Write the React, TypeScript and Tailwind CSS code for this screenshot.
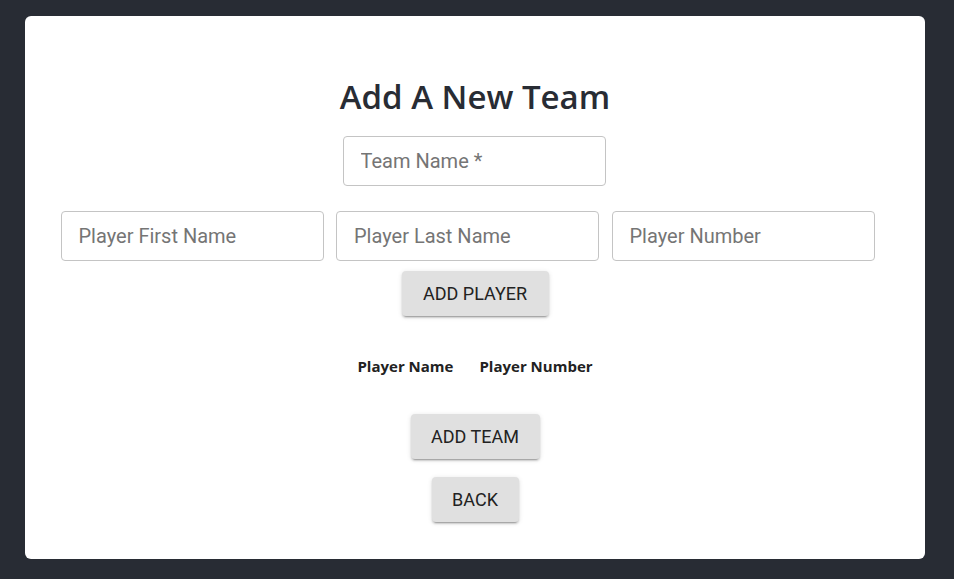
export default function App() {
  const inputCls =
    "h-[50px] w-[263px] rounded-[4px] border border-[#c4c4c4] bg-white px-[17px] text-[20px] text-[#333] placeholder:text-[#757575] outline-none";
  const btnCls =
    "rounded-[4px] bg-[#e0e0e0] text-[18px] uppercase text-[#222] shadow-[0_3px_1px_-2px_rgba(0,0,0,0.2),0_2px_2px_0_rgba(0,0,0,0.14),0_1px_5px_0_rgba(0,0,0,0.12)]";

  return (
    <div className="min-h-[579px] bg-[#282c34] px-[25px] pt-[16px] pb-[20px]">
      <div className="flex h-[543px] w-[900px] flex-col items-center rounded-[6px] bg-white pt-[64px]">
        <h1 className="font-['Open_Sans',sans-serif] text-[33px] font-semibold leading-none text-[#282c34]">
          Add A New Team
        </h1>
        <input className={`${inputCls} mt-[23px] mr-[2px] font-['Roboto',sans-serif]`} placeholder="Team Name *" />
        <div className="mt-[25px] flex gap-[12.5px] pr-[15px] font-['Roboto',sans-serif]">
          <input className={inputCls} placeholder="Player First Name" />
          <input className={inputCls} placeholder="Player Last Name" />
          <input className={inputCls} placeholder="Player Number" />
        </div>
        <button className={`${btnCls} mt-[10px] h-[45px] w-[147px] font-['Roboto',sans-serif]`}>Add Player</button>
        <table className="mt-[39px] font-['Open_Sans',sans-serif] text-[15px] font-bold text-[#222]">
          <thead>
            <tr>
              <th className="px-[13px]">Player Name</th>
              <th className="px-[13px]">Player Number</th>
            </tr>
          </thead>
        </table>
        <button className={`${btnCls} mt-[36px] h-[45px] w-[129px] font-['Roboto',sans-serif]`}>Add Team</button>
        <button className={`${btnCls} mt-[18px] h-[45px] w-[87px] font-['Roboto',sans-serif]`}>Back</button>
      </div>
    </div>
  );
}
